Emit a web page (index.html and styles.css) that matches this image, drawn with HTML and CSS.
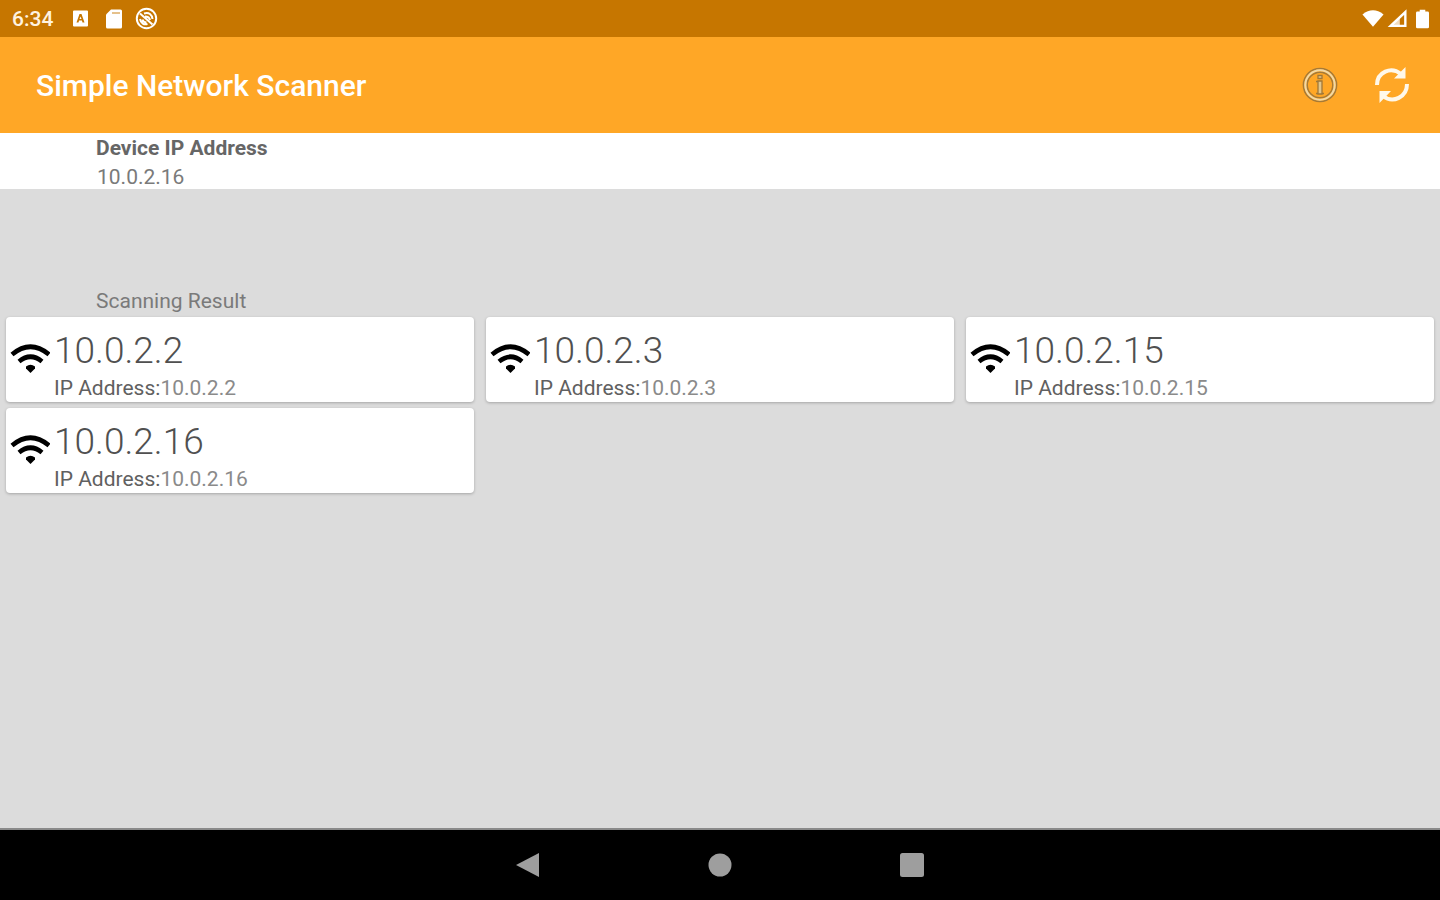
FILE: index.html
```html
<!DOCTYPE html>
<html lang="en">
<head>
<meta charset="utf-8">
<meta name="viewport" content="width=device-width, initial-scale=1">
<title>Simple Network Scanner</title>
<link rel="stylesheet" href="styles.css">
</head>
<body>
<svg class="sprite" aria-hidden="true">
  <symbol id="wifi" viewBox="0 0 40 32">
    <path d="M2 12.500Q20.500-3 39 12.500" fill="none" stroke="#000" stroke-width="4.600"/>
    <path d="M9 19.500Q20.500 10 32 19.500" fill="none" stroke="#000" stroke-width="4.600"/>
    <path d="M16 24.500Q20.500 21 25 24.500V26.500L20.500 31L16 26.500Z"/>
  </symbol>
</svg>
<div class="status-bar">
  <div class="status-group">
    <time class="clock">6:34</time>
    <svg class="status-icon" viewBox="0 0 24 24" aria-hidden="true">
      <path fill="#fff" fill-rule="evenodd" d="M6 3.500h13a1 1 0 0 1 1 1v14a1 1 0 0 1-1 1H6a1 1 0 0 1-1-1v-14a1 1 0 0 1 1-1zM11.500 7L8.500 15.500h2l.6-2h2.800l.6 2h2L13.500 7zM12.500 9.500l1 2.500h-2z"/>
    </svg>
    <svg class="status-icon" viewBox="0 0 24 24" aria-hidden="true">
      <path fill="#fff" d="M10 2.500h9.500a1.500 1.500 0 0 1 1.500 1.500v16a1.500 1.500 0 0 1-1.500 1.500h-13A1.500 1.500 0 0 1 5 20V7.500z"/>
      <path stroke="#c67600" stroke-width="1.500" opacity=".6" d="M11 6h8"/>
    </svg>
    <svg class="status-icon" viewBox="0 0 24 24" fill="none" stroke="#fff" aria-hidden="true">
      <circle cx="12.500" cy="11.500" r="9.700" stroke-width="2"/>
      <path stroke-width="2" d="M6 6.500l12.500 11M6 12c1 4.500 4 6 7.500 5M10 6.500c5-1.500 8 1 8.500 5.500M11 9.500c3 0 4.500 1 5 3.500M8.500 12.500c.5 2 2 3 4 3"/>
    </svg>
  </div>
  <div class="status-group status-right">
    <svg class="signal" viewBox="0 0 24 20" aria-hidden="true"><path fill="#fff" d="M.5 5.500Q12-3.500 23.500 5.500L12 19z"/></svg>
    <svg class="signal" viewBox="0 0 24 20" aria-hidden="true"><path fill="none" stroke="#fff" stroke-width="2.600" d="M20 3v15H4z"/><path fill="#fff" d="M5 17L14 9v9z" opacity=".75"/></svg>
    <svg class="battery" viewBox="0 0 14 20" aria-hidden="true"><path fill="#fff" d="M4 0h6v2h2.500q1.500 0 1.500 1.500v15q0 1.500-1.500 1.500h-11Q0 20 0 18.500v-15Q0 2 1.500 2H4z"/></svg>
  </div>
</div>
<header class="app-bar">
  <h1 class="app-title">Simple Network Scanner</h1>
  <div class="actions">
    <button class="icon-button" type="button" aria-label="About">
      <svg class="action-icon" viewBox="0 0 36 36" fill="none" aria-hidden="true">
        <g stroke="#a57a38" stroke-width="1.500">
          <circle cx="18" cy="18" r="16.600"/><circle cx="18" cy="18" r="12.800"/>
        </g>
        <circle cx="18" cy="18" r="14.700" stroke="#f0d9a8" stroke-width="2"/>
        <path d="M16 14h4v13h-4zM16 8.500h4v3h-4z" fill="#e2c68c" stroke="#a07838" stroke-width="1.300"/>
        <path d="M14 14.500h2M14 26.500h2M20 26.500h2" stroke="#a07838" stroke-width="1.300"/>
      </svg>
    </button>
    <button class="icon-button" type="button" aria-label="Refresh">
      <svg class="action-icon" viewBox="0 0 36 36" aria-hidden="true">
        <g fill="none" stroke="#fff8ea" stroke-width="4">
          <path d="M3 18C3 5 17-1 27 7"/><path d="M33 17C33 30 19 37 9 29"/>
        </g>
        <path fill="#fff8ea" d="M31.500 0v11.500H20zM5.500 36V24H17z"/>
      </svg>
    </button>
  </div>
</header>
<section class="device">
  <h2 class="device-label">Device IP Address</h2>
  <p class="device-ip">10.0.2.16</p>
</section>
<main class="results">
  <h2 class="results-label">Scanning Result</h2>
  <ul class="cards">
    <li class="card">
      <svg class="wifi" aria-hidden="true"><use href="#wifi"/></svg>
      <div class="card-text"><h3 class="host">10.0.2.2</h3><p class="address">IP Address:<span class="ip">10.0.2.2</span></p></div>
    </li>
    <li class="card">
      <svg class="wifi" aria-hidden="true"><use href="#wifi"/></svg>
      <div class="card-text"><h3 class="host">10.0.2.3</h3><p class="address">IP Address:<span class="ip">10.0.2.3</span></p></div>
    </li>
    <li class="card">
      <svg class="wifi" aria-hidden="true"><use href="#wifi"/></svg>
      <div class="card-text"><h3 class="host">10.0.2.15</h3><p class="address">IP Address:<span class="ip">10.0.2.15</span></p></div>
    </li>
    <li class="card">
      <svg class="wifi" aria-hidden="true"><use href="#wifi"/></svg>
      <div class="card-text"><h3 class="host">10.0.2.16</h3><p class="address">IP Address:<span class="ip">10.0.2.16</span></p></div>
    </li>
  </ul>
</main>
<nav class="nav-bar" aria-label="System navigation">
  <button class="nav-button" type="button" aria-label="Back"><svg class="nav-icon" viewBox="0 0 26 26" aria-hidden="true"><path fill="#9e9e9e" d="M1 13L24 1v24z"/></svg></button>
  <button class="nav-button" type="button" aria-label="Home"><svg class="nav-icon" viewBox="0 0 26 26" aria-hidden="true"><circle fill="#9e9e9e" cx="13" cy="13" r="11.500"/></svg></button>
  <button class="nav-button" type="button" aria-label="Recent apps"><svg class="nav-icon" viewBox="0 0 26 26" aria-hidden="true"><rect fill="#9e9e9e" x="1" y="1" width="24" height="24" rx="2.500"/></svg></button>
</nav>
</body>
</html>
```
FILE: styles.css
```css
* {
  box-sizing: border-box;
}

body {
  margin: 0;
  min-height: 100vh;
  display: flex;
  flex-direction: column;
  background: #dcdcdc;
  color: #7a7a7a;
  font-family: Roboto, "Liberation Sans", sans-serif;
  font-size: 21px;
  line-height: 24px;
}

h1, h2, h3, p, ul {
  margin: 0;
  padding: 0;
  font-weight: 400;
}

button {
  padding: 0;
  border: 0;
  background: none;
  cursor: pointer;
}

svg {
  display: block;
}

.sprite {
  position: absolute;
  width: 0;
  height: 0;
}

.status-bar {
  display: flex;
  align-items: center;
  justify-content: space-between;
  height: 37px;
  padding: 0 11px 0 12px;
  background: #c67600;
}

.status-group {
  display: flex;
  align-items: center;
  gap: 9px;
}

.status-right {
  gap: 3px;
}

.clock {
  margin-right: 6px;
  color: #fff3e0;
  font-weight: 500;
}

.status-icon {
  width: 24px;
  height: 24px;
}

.signal {
  width: 22px;
  height: 19px;
}

.battery {
  width: 13px;
  height: 20px;
  margin-left: 4px;
}

.app-bar {
  display: flex;
  align-items: center;
  justify-content: space-between;
  height: 96px;
  padding: 0 12px 0 36px;
  background: #ffa726;
}

.app-title {
  padding-top: 2px;
  color: #fff;
  font-size: 30px;
  font-weight: 500;
  line-height: 36px;
}

.actions {
  display: flex;
}

.icon-button {
  display: flex;
  align-items: center;
  justify-content: center;
  width: 72px;
  height: 72px;
}

.action-icon {
  width: 36px;
  height: 36px;
}

.device {
  padding: 3px 96px 0;
  background: #fff;
}

.device-label {
  font-size: 21px;
  font-weight: 700;
  color: #666;
}

.device-ip {
  padding: 5px 1px 0;
}

.results {
  flex: 1;
  padding: 100px 6px 6px;
}

.results-label {
  padding-left: 90px;
  font-size: 21px;
}

.cards {
  display: grid;
  grid-template-columns: repeat(3, 1fr);
  gap: 6px 12px;
  margin-top: 4px;
  list-style: none;
}

.card {
  display: flex;
  align-items: flex-start;
  gap: 4px;
  padding: 13px 4px 2px;
  border-radius: 4px;
  background: #fff;
  box-shadow: 0 1px 3px rgba(0, 0, 0, 0.25);
}

.wifi {
  flex: none;
  width: 40px;
  height: 32px;
  margin-top: 12px;
}

.host {
  font-size: 37px;
  font-weight: 300;
  line-height: 42px;
  color: #505050;
}

.address {
  margin-top: 4px;
  color: #606060;
}

.ip {
  color: #8a8a8a;
}

.nav-bar {
  display: flex;
  justify-content: center;
  gap: 120px;
  height: 72px;
  border-top: 2px solid #8a8a8a;
  background: #000;
}

.nav-button {
  display: flex;
  align-items: center;
  justify-content: center;
  width: 72px;
}

.nav-icon {
  width: 26px;
  height: 26px;
}
```
